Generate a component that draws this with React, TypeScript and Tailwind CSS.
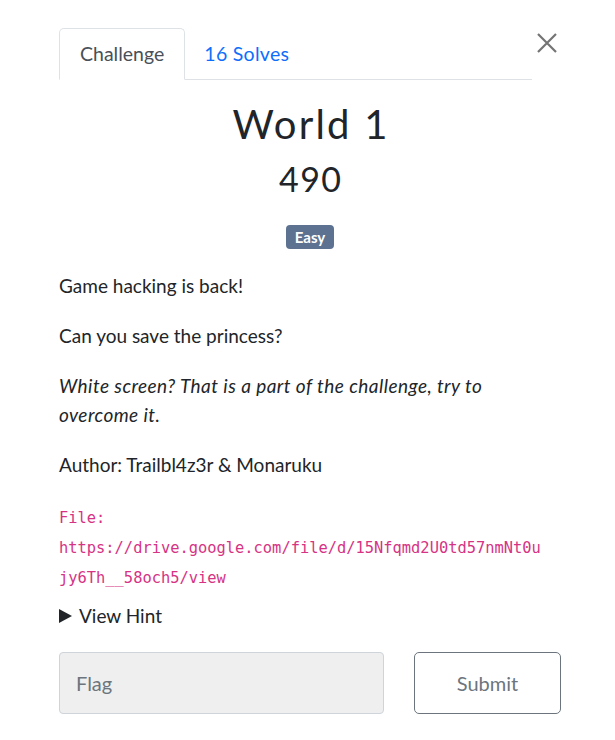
import React from "react";

export default function App() {
  return (
    <div className="w-[615px] h-[740px] bg-white font-['Lato',sans-serif] text-[#212529]">
      <div className="ml-[59px] flex w-[502px] flex-col pt-[28px]">
        <div className="flex items-start">
          <div className="flex w-[473px] border-b border-[#dee2e6]">
            <div className="-mb-px flex h-[52px] items-center rounded-t-[5px] border border-b-white border-[#dee2e6] bg-white px-[20px] text-[19.5px] text-[#495057]">
              Challenge
            </div>
            <div className="flex h-[51px] items-center px-[19px] text-[19.5px] tracking-[0.3px] text-[#0d6efd]">
              16 Solves
            </div>
          </div>
          <button className="ml-[4px] mt-[4px] flex h-[22px] w-[22px] items-center justify-center">
            <svg width="22" height="22" viewBox="0 0 22 22" fill="none">
              <path d="M2 2 L20 20 M20 2 L2 20" stroke="#747474" strokeWidth="2.2" />
            </svg>
          </button>
        </div>

        <div className="flex flex-col items-center">
          <h2 className="mt-[16px] pl-[2px] text-[40px] font-normal leading-[56px] tracking-[2.2px]">World 1</h2>
          <h3 className="mt-[2px] pl-[1.5px] text-[34px] font-normal leading-[50px] tracking-[1.5px]">490</h3>
          <span className="mt-[21px] rounded-[4px] bg-[#5c7290] px-[9px] py-[3px] text-[15px] font-bold leading-[18px] text-white">
            Easy
          </span>
        </div>

        <div className="mt-[22px] flex flex-col text-[19px] leading-[29px]">
          <p>Game hacking is back!</p>
          <p className="mt-[21px]">Can you save the princess?</p>
          <p className="mt-[21px] italic tracking-[0.45px]">
            White screen? That is a part of the challenge, try to overcome it.
          </p>
          <p className="mt-[21px]">Author: Trailbl4z3r &amp; Monaruku</p>
          <p className="mt-[23.5px] w-[486px] break-all font-['DejaVu_Sans_Mono',monospace] text-[15.4px] leading-[30px] text-[#d63384]">
            File:
            <br />
            https://drive.google.com/file/d/15Nfqmd2U0td57nmNt0ujy6Th__58och5/view
          </p>
          <div className="mt-[8.5px] flex items-center gap-[7px]">
            <svg width="13" height="14" viewBox="0 0 13 14">
              <path d="M0 0 L13 7 L0 14 Z" fill="#212529" />
            </svg>
            <span>View Hint</span>
          </div>
        </div>

        <div className="mt-[22px] flex items-center">
          <div className="flex h-[62px] w-[325px] items-center rounded-[4px] border border-[#ced4da] bg-[#efefef] px-[16px] text-[20px] text-[#6c757d]">
            Flag
          </div>
          <button className="ml-[30px] flex h-[62px] w-[147px] items-center justify-center rounded-[5px] border border-[#6c757d] text-[20px] text-[#6c757d]">
            Submit
          </button>
        </div>
      </div>
    </div>
  );
}
